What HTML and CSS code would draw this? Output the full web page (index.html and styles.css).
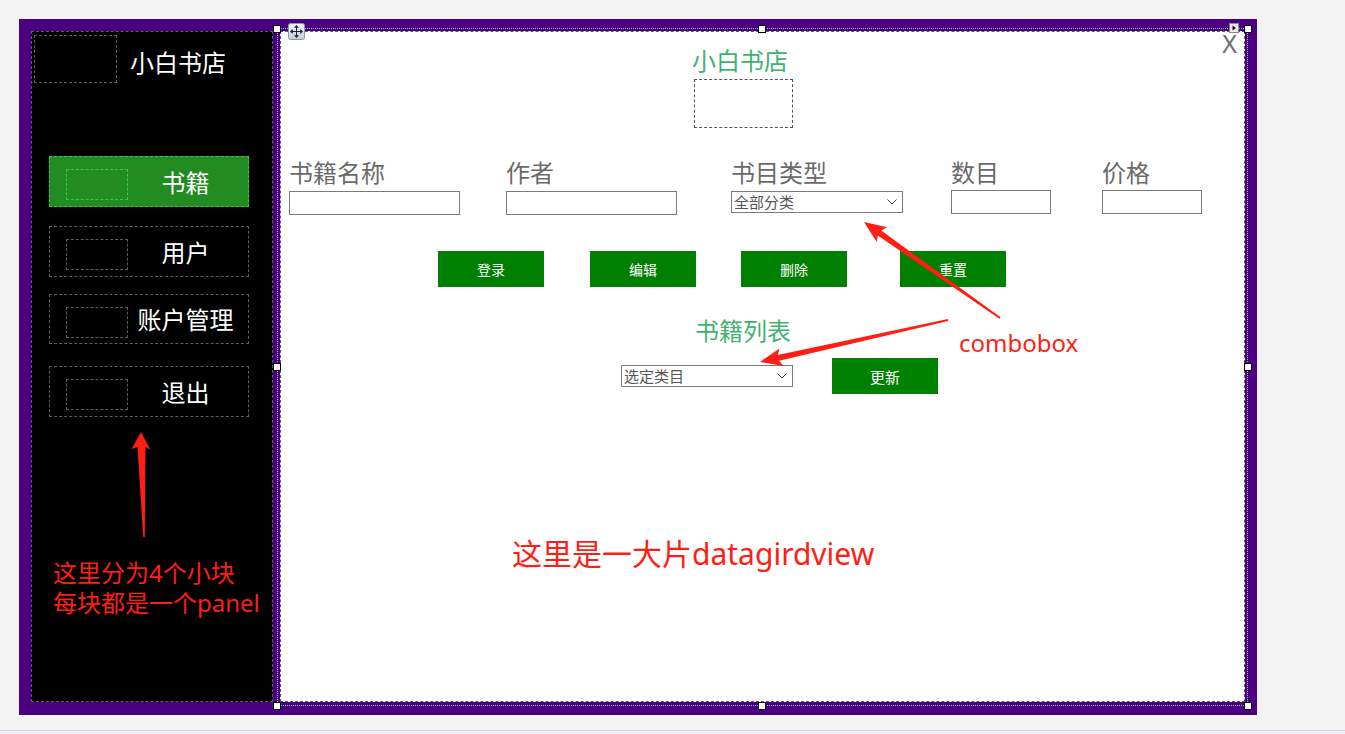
FILE: index.html
```html
<!DOCTYPE html>
<html lang="zh-CN">
<head>
<meta charset="utf-8">
<title>小白书店</title>
<link rel="stylesheet" href="styles.css">
</head>
<body>
<div class="designer">
  <div class="frame">
    <aside class="sidebar">
      <div class="brand">
        <div class="logo-box"></div>
        <div class="brand-name">小白书店</div>
      </div>
      <nav class="nav">
        <div class="nav-item active"><div class="icon-box"></div><span class="nav-label">书籍</span></div>
        <div class="nav-item nav-2"><div class="icon-box"></div><span class="nav-label">用户</span></div>
        <div class="nav-item nav-3"><div class="icon-box"></div><span class="nav-label">账户管理</span></div>
        <div class="nav-item nav-4"><div class="icon-box"></div><span class="nav-label">退出</span></div>
      </nav>
      <p class="note side-note">这里分为4个小块<br>每块都是一个panel</p>
    </aside>
    <main class="panel">
      <div class="close">X</div>
      <header class="panel-head">
        <h1 class="title">小白书店</h1>
        <div class="pic-box"></div>
      </header>
      <div class="fields">
        <div class="field"><span class="field-label">书籍名称</span><span class="textbox w171"></span></div>
        <div class="field"><span class="field-label">作者</span><span class="textbox w171"></span></div>
        <div class="field"><span class="field-label">书目类型</span>
          <div class="combo combo-field"><span>全部分类</span><svg class="chev" width="10" height="6" viewBox="0 0 10 6"><path d="M0.5 0.5L5 5L9.5 0.5" fill="none" stroke="#444" stroke-width="1"/></svg></div>
        </div>
        <div class="field"><span class="field-label">数目</span><span class="textbox w100"></span></div>
        <div class="field"><span class="field-label">价格</span><span class="textbox w100"></span></div>
      </div>
      <div class="actions">
        <button class="btn">登录</button>
        <button class="btn">编辑</button>
        <button class="btn">删除</button>
        <button class="btn">重置</button>
      </div>
      <h2 class="title list-title">书籍列表</h2>
      <div class="filter">
        <div class="combo"><span>选定类目</span><svg class="chev" width="10" height="6" viewBox="0 0 10 6"><path d="M0.5 0.5L5 5L9.5 0.5" fill="none" stroke="#444" stroke-width="1"/></svg></div>
        <button class="btn">更新</button>
      </div>
      <p class="note grid-note">这里是一大片datagirdview</p>
    </main>
  </div>

  <div class="selection">
    <span class="handle h-tl"></span><span class="handle h-tc"></span><span class="handle h-tr"></span>
    <span class="handle h-ml"></span><span class="handle h-mr"></span>
    <span class="handle h-bl"></span><span class="handle h-bc"></span><span class="handle h-br"></span>
  </div>

  <svg class="move-glyph" width="17" height="17" viewBox="0 0 17 17">
    <defs><linearGradient id="mg" x1="0" y1="0" x2="0" y2="1"><stop offset="0" stop-color="#f5f8fc"/><stop offset="1" stop-color="#c0ccdc"/></linearGradient></defs>
    <rect x="0.5" y="0.5" width="16" height="16" rx="2" fill="url(#mg)" stroke="#8d99ab"/>
    <path d="M8.5 4v9M4 8.5h9" stroke="#222" stroke-width="1"/>
    <path d="M8.5 2l-2.5 2.8h5zM8.5 15l-2.5-2.8h5zM2 8.5l2.8-2.5v5zM15 8.5l-2.8-2.5v5z" fill="#222"/>
  </svg>

  <svg class="smart-tag" width="10" height="10" viewBox="0 0 10 10">
    <rect x="0.5" y="0.5" width="9" height="9" fill="#ececec" stroke="#8a8a8a"/>
    <path d="M3.5 2.5L7 5L3.5 7.5z" fill="#111"/>
  </svg>

  <svg class="arrows" width="1345" height="734" viewBox="0 0 1345 734">
    <polygon fill="#ff1e14" points="141,432 150.5,450 145.5,447 144.8,537 143.2,537 137.5,447 131.5,449"/>
    <polygon fill="#ff1e14" points="864,222 887.2,227.3 881.2,230.6 1000.6,317.2 999.4,318.8 877.8,235.5 876.8,242.1"/>
    <polygon fill="#ff1e14" points="760,362 779.5,348.4 777.8,355 947.8,319 948.2,321 779.2,360.8 783.5,366"/>
  </svg>

  <div class="note combo-note">combobox</div>
</div>
<div class="statusline"></div>
</body>
</html>
```

FILE: styles.css
```css
* {
  box-sizing: border-box;
  margin: 0;
  padding: 0;
}

html,
body {
  width: 1345px;
  height: 734px;
  overflow: hidden;
}

body {
  background: #f3f3f3;
  font-family: "Noto Sans CJK SC", "Noto Sans", sans-serif;
}

.designer {
  position: relative;
  height: 730px;
  padding: 19px 0 0 19px;
}

.frame {
  width: 1238px;
  height: 696px;
  background: #4b0082;
  padding: 12px 12px 13px 12px;
  display: flex;
  gap: 7px;
}

/* ---------- sidebar ---------- */
.sidebar {
  width: 242px;
  background: #000;
  border: 1px dashed #5c5c5c;
  display: flex;
  flex-direction: column;
}

.brand {
  display: flex;
  align-items: flex-start;
  padding: 3px 0 0 2px;
}

.logo-box {
  width: 83px;
  height: 48px;
  border: 1px dashed #5c5c5c;
}

.brand-name {
  margin: 15px 0 0 13px;
  color: #fff;
  font-size: 24px;
  line-height: 24px;
}

.nav {
  display: flex;
  flex-direction: column;
  margin: 73px 0 0 17px;
}

.nav-item {
  width: 200px;
  height: 51px;
  border: 1px dashed #5c5c5c;
  display: flex;
  align-items: center;
}

.nav-item.active {
  background: #228b22;
  border-color: #38d038;
}

.icon-box {
  align-self: flex-start;
  width: 62px;
  height: 31px;
  margin: 12px 0 0 16px;
  border: 1px dashed #5c5c5c;
}

.active .icon-box {
  border-color: #38d038;
}

.nav-label {
  flex: 1;
  margin-left: -5px;
  text-align: center;
  color: #fff;
  font-size: 24px;
  line-height: 24px;
}

.nav-2 {
  margin-top: 19px;
}

.nav-3 {
  margin-top: 17px;
  height: 50px;
}

.nav-4 {
  margin-top: 22px;
}

.note {
  color: #ff1e14;
  font-family: "Noto Sans", "Noto Sans CJK SC", sans-serif;
}

.side-note {
  margin: 141px 0 0 21px;
  font-size: 24px;
  line-height: 30px;
}

/* ---------- main panel ---------- */
.panel {
  position: relative;
  width: 965px;
  background: #fff;
  border: 1px dashed #5c5c5c;
}

.close {
  position: absolute;
  top: -1px;
  right: 7px;
  font-family: "Noto Sans", sans-serif;
  font-size: 25px;
  line-height: 25px;
  color: #6e6e6e;
}

.panel-head {
  padding: 16px 0 0 411px;
}

.title {
  font-size: 24px;
  line-height: 24px;
  font-weight: normal;
  color: #3cb371;
}

.pic-box {
  width: 99px;
  height: 49px;
  margin: 7px 0 0 2px;
  border: 1px dashed #555;
}

.fields {
  display: grid;
  grid-template-columns: 217px 225px 220px 151px 1fr;
  padding-left: 8px;
  margin-top: 32px;
}

.field {
  display: flex;
  flex-direction: column;
  align-items: flex-start;
}

.field-label {
  font-size: 24px;
  line-height: 24px;
  color: #6a6a6a;
}

.textbox {
  display: block;
  margin-top: 7px;
  height: 24px;
  border: 1px solid #7a7a7a;
  background: #fff;
}

.w171 {
  width: 171px;
}

.w100 {
  width: 100px;
  margin-top: 6px;
}

.combo {
  width: 172px;
  height: 22px;
  border: 1px solid #7a7a7a;
  background: #fff;
  display: flex;
  align-items: center;
  justify-content: space-between;
  padding: 0 5px 0 2px;
  font-size: 15px;
  line-height: 20px;
  color: #555;
}

.combo-field {
  margin-top: 7px;
}

.chev {
  display: block;
}

.actions {
  display: grid;
  grid-template-columns: 152px 151px 159px auto;
  padding-left: 157px;
  margin-top: 36px;
}

.btn {
  width: 106px;
  height: 36px;
  border: none;
  background: #008000;
  color: #fff;
  font-family: "Noto Sans CJK SC", sans-serif;
  font-size: 14px;
}

.list-title {
  margin-top: 31px;
  padding-left: 414px;
}

.filter {
  display: flex;
  align-items: center;
  gap: 39px;
  margin-top: 16px;
  padding-left: 340px;
}

.filter .btn {
  font-size: 15px;
}

.grid-note {
  margin-top: 145px;
  padding-left: 231px;
  font-size: 30px;
  line-height: 30px;
}

/* ---------- designer adorners (overlays) ---------- */
.selection {
  position: absolute;
  left: 277px;
  top: 28px;
  width: 971px;
  height: 678px;
  border: 1px dotted #b9aad8;
  pointer-events: none;
}

.handle {
  position: absolute;
  width: 8px;
  height: 8px;
  background: #fff;
  border: 1px solid #000;
}

.h-tl { left: -5px; top: -4px; }
.h-tc { left: 480px; top: -4px; }
.h-tr { left: 966px; top: -4px; }
.h-ml { left: -5px; top: 334px; }
.h-mr { left: 966px; top: 334px; }
.h-bl { left: -5px; top: 673px; }
.h-bc { left: 480px; top: 673px; }
.h-br { left: 966px; top: 673px; }

.move-glyph {
  position: absolute;
  left: 288px;
  top: 23px;
}

.smart-tag {
  position: absolute;
  left: 1229px;
  top: 23px;
}

.arrows {
  position: absolute;
  left: 0;
  top: 0;
  pointer-events: none;
}

.combo-note {
  position: absolute;
  left: 959px;
  top: 331px;
  font-size: 24px;
  line-height: 24px;
}

.statusline {
  height: 4px;
  border-top: 1px solid #d8d8e4;
  background: #eeeef3;
}
```
